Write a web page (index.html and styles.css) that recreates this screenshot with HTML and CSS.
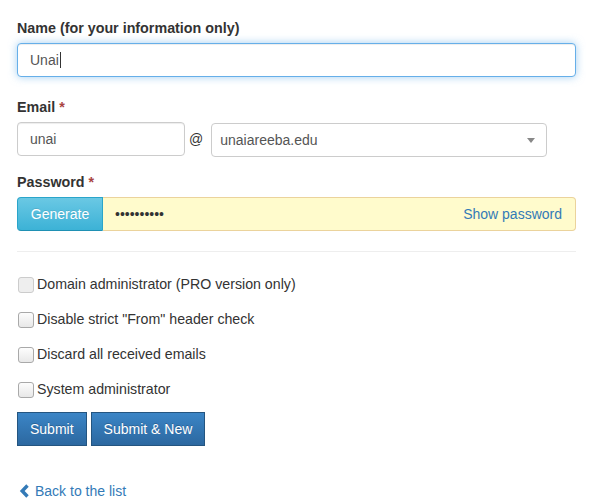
FILE: index.html
```html
<!DOCTYPE html>
<html>
<head>
<meta charset="utf-8">
<link rel="stylesheet" href="styles.css">
</head>
<body>
<div class="page">
  <form class="form">
    <div class="form-group first">
      <label class="label">Name (for your information only)</label>
      <div class="input focus">Unai<span class="caret"></span></div>
    </div>
    <div class="form-group">
      <label class="label">Email <span class="req">*</span></label>
      <div class="email-row">
        <div class="input user">unai</div>
        <span class="at">@</span>
        <div class="input select">unaiareeba.edu<span class="arrow"></span></div>
      </div>
    </div>
    <div class="form-group">
      <label class="label">Password <span class="req">*</span></label>
      <div class="input-group">
        <span class="btn-generate">Generate</span>
        <div class="pw">
          <span class="dots">••••••••••</span>
          <a class="show">Show password</a>
        </div>
      </div>
    </div>
    <hr class="sep">
    <div class="check"><span class="box disabled"></span>Domain administrator (PRO version only)</div>
    <div class="check"><span class="box"></span>Disable strict "From" header check</div>
    <div class="check"><span class="box"></span>Discard all received emails</div>
    <div class="check last"><span class="box"></span>System administrator</div>
    <div class="actions">
      <span class="btn">Submit</span>
      <span class="btn">Submit &amp; New</span>
    </div>
    <a class="back"><svg class="chev" width="11" height="14" viewBox="0 0 11 14"><path d="M8.5 1.5 L3.2 7 L8.5 12.5" fill="none" stroke="#337ab7" stroke-width="3.4"/></svg>Back to the list</a>
  </form>
</div>
</body>
</html>
```
FILE: styles.css
```css
* { box-sizing: border-box; }
body {
  margin: 0;
  font-family: "Liberation Sans", Arial, sans-serif;
  font-size: 14px;
  line-height: 20px;
  color: #333;
  background: #fff;
}
.page { padding: 18px 40px 0 17px; }
.form { width: 559px; }
.form-group { margin-bottom: 15px; }
.form-group.first { margin-bottom: 20px; }
.label { display: block; font-weight: bold; margin-bottom: 5px; font-size: 14.3px; }
.req { color: #a94442; }
.input {
  height: 34px;
  padding: 6px 12px;
  border: 1px solid #ccc;
  border-radius: 4px;
  color: #555;
  background: #fff;
  box-shadow: inset 0 1px 1px rgba(0,0,0,.075);
  position: relative;
}
.input.focus {
  border-color: #66afe9;
  box-shadow: inset 0 1px 1px rgba(0,0,0,.075), 0 0 8px rgba(102,175,233,.6);
}
.caret {
  display: inline-block;
  width: 1px;
  height: 16px;
  background: #333;
  vertical-align: -3px;
  margin-left: 1px;
}
.email-row { display: flex; align-items: flex-start; }
.user { width: 168px; }
.at { padding: 5px 8px 0 4px; color: #333; line-height: 24px; }
.select { width: 336px; margin-top: 1px; padding-left: 8px; box-shadow: none; }
.arrow {
  position: absolute;
  right: 11px;
  top: 14px;
  border-left: 4px solid transparent;
  border-right: 4px solid transparent;
  border-top: 5px solid #888;
}
.input-group { display: flex; height: 34px; }
.btn-generate {
  width: 86px;
  color: #fff;
  padding: 6px 0;
  text-align: center;
  background: linear-gradient(#6ac8e4, #3cb2d6);
  border: 1px solid #2aa5ca;
  border-bottom-color: #1f90b3;
  border-radius: 4px 0 0 4px;
  text-shadow: 0 -1px 0 rgba(0,0,0,.1);
}
.pw {
  flex: 1;
  display: flex;
  justify-content: space-between;
  background: #fffbcc;
  border: 1px solid #ebd39c;
  border-left: none;
  border-radius: 0 4px 4px 0;
  padding: 6px 13px 6px 12px;
  color: #333;
}
.dots { font-size: 14px; letter-spacing: 0; color: #333; }
.show { color: #337ab7; }
.sep { border: 0; border-top: 1px solid #eee; margin: 20px 0 22px; }
.check {
  display: flex;
  align-items: center;
  height: 20px;
  margin-bottom: 15px;
  font-size: 14.2px;
}
.check.last { margin-bottom: 13px; }
.box {
  width: 16px;
  height: 16px;
  border: 1px solid #a9a9a9;
  border-radius: 3px;
  background: linear-gradient(#fdfdfd, #e8e8e8);
  margin: 2px 3px 0 1px;
  flex: none;
}
.box.disabled { border-color: #ccc; background: #eee; }
.actions { display: flex; gap: 4px; margin-top: 0; }
.btn {
  height: 34px;
  padding: 6px 12px;
  color: #fff;
  background: linear-gradient(#3b85c6, #2c68a0);
  border: 1px solid #245580;
  border-radius: 0;
  text-shadow: 0 -1px 0 rgba(0,0,0,.2);
}
.back {
  display: flex;
  align-items: center;
  margin-top: 35px;
  color: #337ab7;
  text-decoration: none;
}
.chev { margin: 0 5px 0 2px; }
```
